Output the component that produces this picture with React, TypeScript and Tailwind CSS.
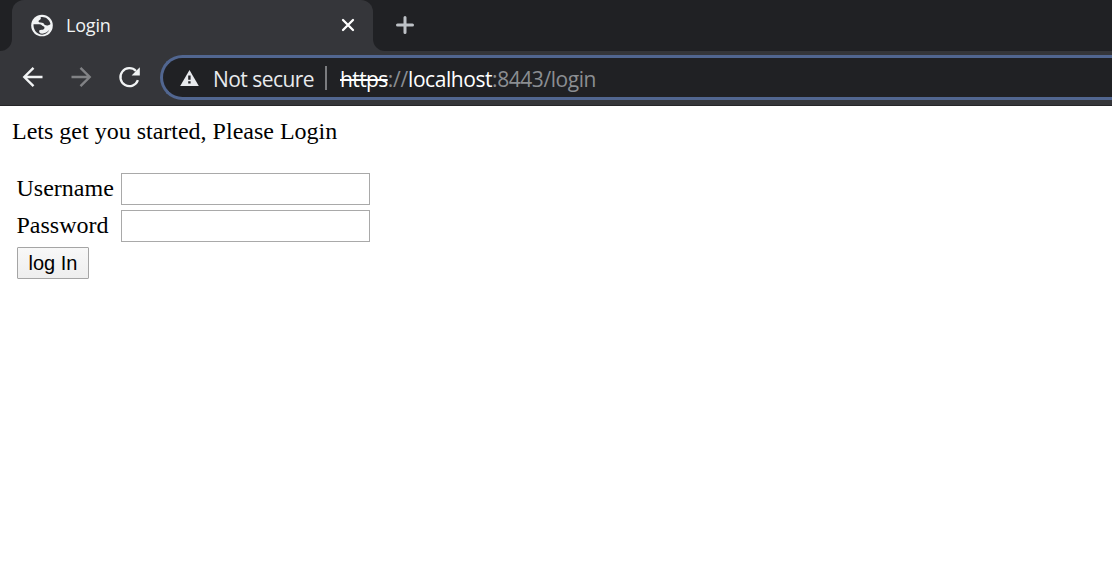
export default function App() {
  return (
    <div className="flex h-[576px] w-[1112px] flex-col overflow-hidden bg-white">
      <header className="shrink-0">
        <div className="flex h-[51px] items-stretch bg-[#202124]">
          <div className="w-3 bg-[#35363a]"><div className="h-full rounded-br-[12px] bg-[#202124]" /></div>
          <div className="flex w-[361px] items-center rounded-t-[12px] bg-[#35363a] pb-[2px] pl-[18px] pr-[18px]">
            <svg className="h-6 w-6 shrink-0" viewBox="0 0 24 24">
              <circle cx="12" cy="12.500" r="10.800" fill="#f1f3f4" />
              <path fill="#35363a" d="M3.500 11.300C5 11 7.500 11.300 9.600 11.300c1.700 0 2.300 1.600 3.700 1.900 1.600.4 1.500 2.200.4 3-1 .8-3.300.3-4.500 1.300-.3 1.200.4 2.200 1.500 3.100 3.600.5 6.800-1.100 8.600-4-1.500 4.300-6.300 6.200-10.200 4.500C5.500 19.500 3.300 15.700 3.500 11.300zM10.500 4.300c4.500-1 8.900 2 10 6.700-1.500 1.500-3.800 1.900-5.500 1-1.200-.6-.8-1.700-1.900-2.100-1.400-.5-3.300.1-4.300-.9-.8-1 .1-1.800 1.200-2.300.9-.5 1.100-1.500.5-2.400z" />
            </svg>
            <span className="ml-3 flex-1 whitespace-nowrap font-['Open_Sans',sans-serif] text-[18px] leading-6 tracking-[-0.2px] text-[#f1f3f4]">Login</span>
            <svg className="h-[14px] w-[14px]" viewBox="0 0 14 14" stroke="#fff" strokeWidth="2.300" strokeLinecap="round"><path d="M2 2l10 10M12 2L2 12" /></svg>
          </div>
          <div className="flex flex-1 items-center bg-[#35363a]">
            <div className="flex h-full flex-1 items-center rounded-bl-[12px] bg-[#202124] pb-[1px] pl-[22px]">
              <svg className="h-5 w-5" viewBox="0 0 20 20" stroke="#bdc1c6" strokeWidth="3" strokeLinecap="round"><path d="M10 2.500v15M2.500 10h15" /></svg>
            </div>
          </div>
        </div>
        <div className="flex h-[55px] items-start border-b border-[#252528] bg-[#35363a] pt-1">
          <div className="flex h-[45px] w-[160px] items-center pb-[1px] pl-[21px]">
            <svg className="h-6 w-6" viewBox="0 0 24 24" fill="none" stroke="#f1f3f4" strokeWidth="2.400"><path d="M21.500 12H3.500M12.500 2.800L3.300 12l9.200 9.200" /></svg>
            <svg className="ml-6 h-6 w-6" viewBox="0 0 24 24" fill="none" stroke="#818285" strokeWidth="2.400"><path d="M2.500 12h18M11.500 2.800l9.200 9.200-9.200 9.200" /></svg>
            <svg className="ml-6 h-6 w-6" viewBox="0 0 24 24" fill="none"><path d="M20.900 15.200A9 9 0 1 1 19 6" stroke="#f1f3f4" strokeWidth="2.300" /><path d="M22.800 2.300v8.200h-8.200z" fill="#f1f3f4" /></svg>
          </div>
          <div className="flex h-[45px] flex-1 items-center whitespace-nowrap rounded-l-full border-y-[3px] border-l-[3px] border-[#516690] bg-[#202124] pl-[16px] font-['Open_Sans',sans-serif] text-[21px] leading-7">
            <svg className="mt-[1px] h-5 w-5" viewBox="0 0 20 20"><path d="M10.500 2L19.800 18H1.200z" fill="#e8eaed" /><path d="M9.200 7.500h2.400v4.300H9.200zm0 5.800h2.400v2.200H9.200z" fill="#202124" /></svg>
            <span className="ml-[14px] w-[112px] pt-[2px] tracking-[-0.55px] text-[#e8eaed]">Not secure</span>
            <span className="h-6 w-[2px] bg-[#7b7c7f]" />
            <span className="ml-[13px] pt-[2px] tracking-[-0.44px] text-[#8b8e92]"><span className="tracking-[-0.6px] text-white line-through">https</span><span className="tracking-[-0.2px]">://</span><span className="text-white">localhost</span>:8443/login</span>
          </div>
        </div>
      </header>
      <main className="px-3 pt-[11px] font-['Liberation_Serif',serif] text-[24px] leading-7 text-black">
        <p>Lets get you started, Please Login</p>
        <form className="mt-7 grid grid-cols-[104px_249px] gap-y-[5px] pl-[5px]" onSubmit={(e) => e.preventDefault()}>
          <label htmlFor="username" className="-ml-[0.5px] h-8 pt-[1px]">Username</label>
          <input id="username" className="h-8 w-[249px] border border-[#a9a9a9] bg-white px-1" />
          <label htmlFor="password" className="-ml-[0.5px] h-8 pt-[1px]">Password</label>
          <input id="password" type="password" className="h-8 w-[249px] border border-[#a9a9a9] bg-white px-1" />
          <button className="h-8 w-[72px] rounded-[1px] border border-[#a5a5a5] bg-linear-to-b from-[#f8f8f8] to-[#eeeeee] font-['Liberation_Sans',sans-serif] text-[20px] leading-[29px]">log In</button>
        </form>
      </main>
    </div>
  );
}
